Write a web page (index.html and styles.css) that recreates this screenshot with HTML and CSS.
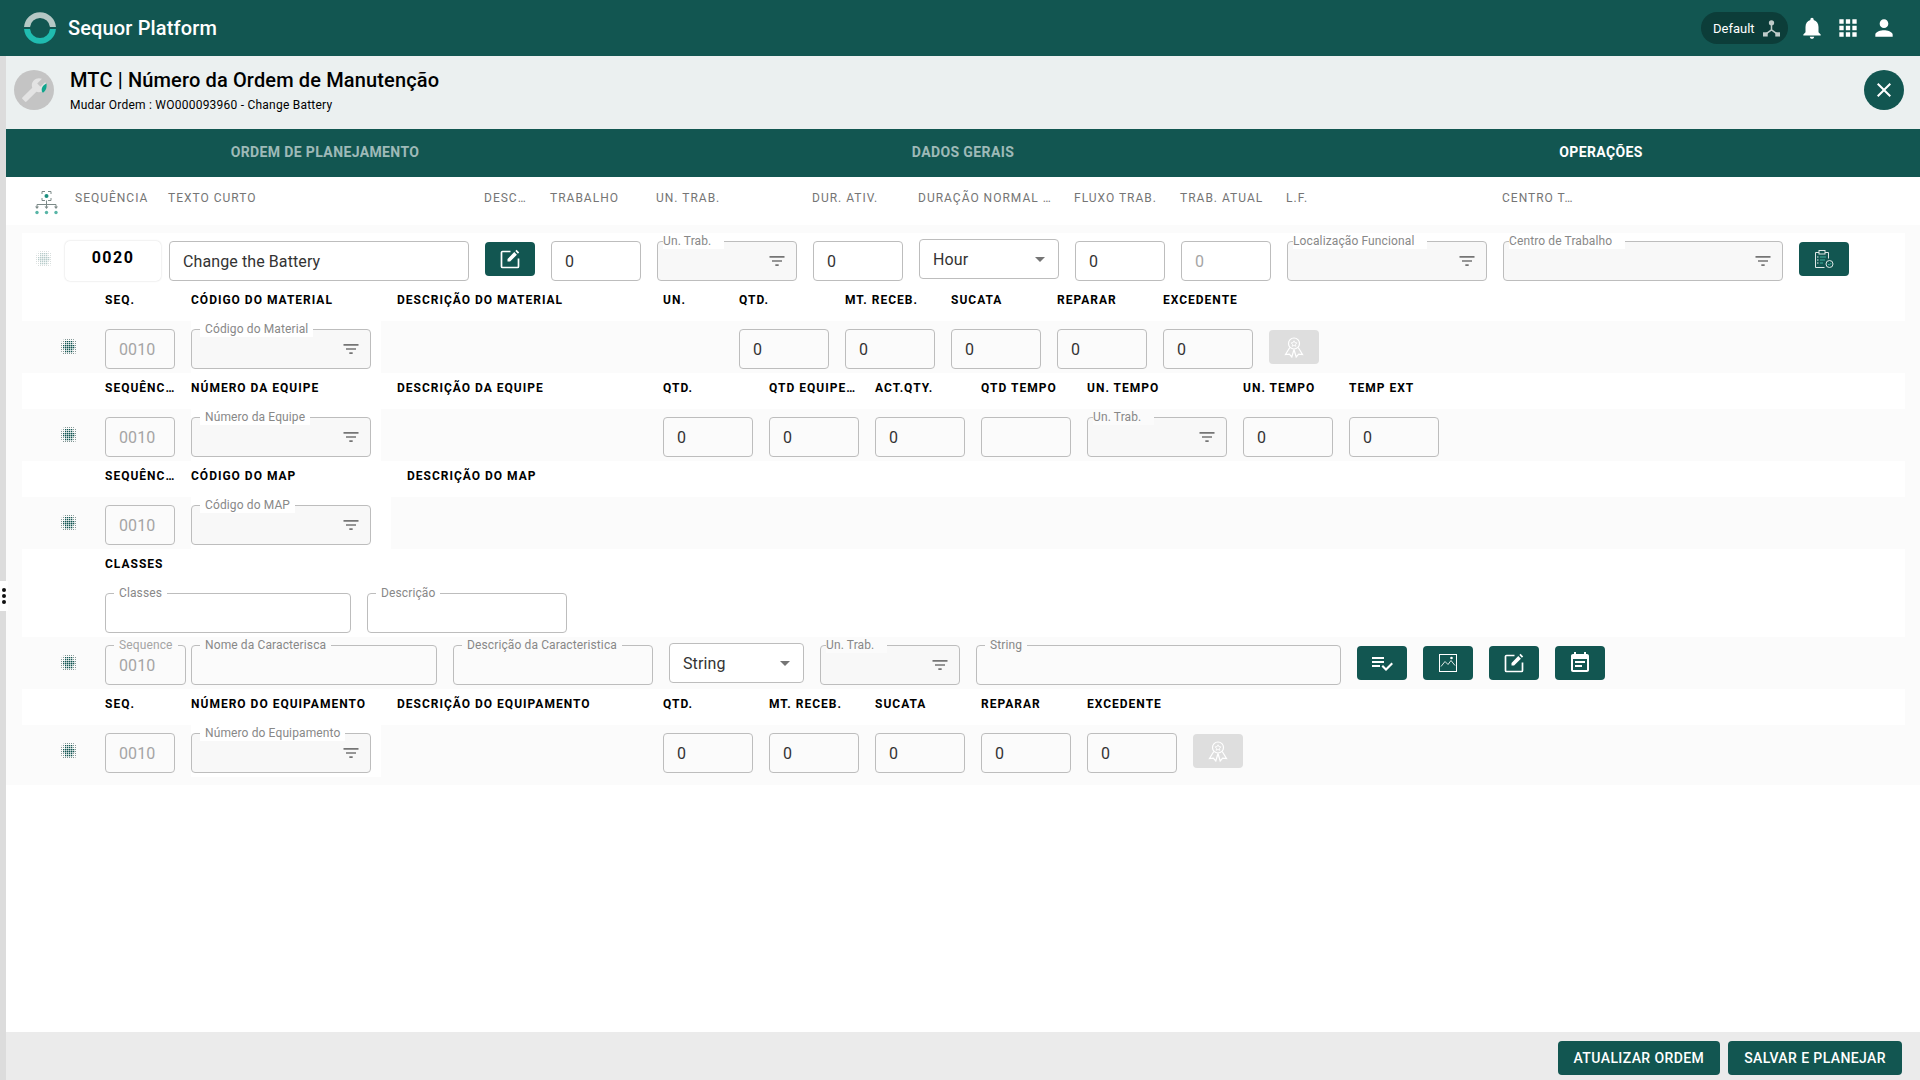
FILE: index.html
```
<!DOCTYPE html>
<html>
<head>
<meta charset="utf-8">
<title>Sequor Platform</title>
<link rel="stylesheet" href="styles.css">
</head>
<body>

<svg class="defs" width="0" height="0">
    <defs>
        <pattern id="dots-light" width="2" height="2" patternUnits="userSpaceOnUse"><rect width="1" height="1" fill="#7f9492"/></pattern>
        <pattern id="dots-dark" width="2" height="2" patternUnits="userSpaceOnUse"><rect width="1.300" height="1.300" fill="#125651"/></pattern>
    </defs>
    <symbol id="i-filter" viewBox="0 0 24 24"><path d="M10 18h4v-2h-4v2zM3 6v2h18V6H3zm3 7h12v-2H6v2z"/></symbol>
    <symbol id="i-drag" viewBox="0 0 16 16">
        <rect width="16" height="16" rx="5" fill="url(#dots-light)"/>
        <rect x="4" y="2" width="8" height="12" fill="url(#dots-dark)"/>
        <rect x="2" y="6" width="12" height="4" fill="url(#dots-dark)"/>
    </symbol>
    <symbol id="i-edit" viewBox="0 0 24 24">
        <path d="M12.500 4.500H4.500a1 1 0 0 0-1 1v14a1 1 0 0 0 1 1h15a1 1 0 0 0 1-1v-8" fill="none" stroke="#fff" stroke-width="1.700"/>
        <path d="M9.500 14.500v-2.600l6.800-6.800 2.600 2.600-6.800 6.800zM17.300 4.100l1.300-1.300 2.600 2.600-1.300 1.300z" fill="#fff"/>
    </symbol>
    <symbol id="i-award" viewBox="0 0 24 24">
        <g fill="none" stroke="#fff" stroke-width="1.200">
            <circle cx="12" cy="8.500" r="5.500"/>
            <path d="M7.800 12.500L3.500 19.500l3.800-.4L9.800 22l2.200-7.500M16.200 12.500L20.500 19.500l-3.800-.4-2.500 2.900-2.200-7.500"/>
            <path d="M12 5.800l.9 1.800 2 .3-1.400 1.400.3 2-1.800-.9-1.800.9.3-2-1.400-1.400 2-.3z" stroke-width=".9"/>
        </g>
    </symbol>
</svg>

<header class="topbar">
    <svg class="logo" viewBox="0 0 32 32">
        <path d="M.05 15A16 16 0 0 1 31.950 15H25.950A10 10 0 0 0 6.050 15Z" fill="#b5c8c5"/>
        <path d="M.05 17A16 16 0 0 0 31.950 17H25.950A10 10 0 0 1 6.050 17Z" fill="#20bcb0"/>
    </svg>
    <span class="brand">Sequor Platform</span>
    <div class="topbar-right">
        <div class="pill">
            <span>Default</span>
            <svg class="pill-icon" viewBox="0 0 18 18">
                <circle cx="9" cy="3" r="2.800" fill="#bfcbc9"/>
                <rect x="0" y="13" width="5" height="4.500" fill="#bfcbc9"/>
                <rect x="13" y="13" width="5" height="4.500" fill="#bfcbc9"/>
                <path d="M9 5v5.500M9 10.500l-5.500 4M9 10.500l5.500 4" stroke="#bfcbc9" stroke-width="1.600" fill="none"/>
            </svg>
        </div>
        <svg class="top-icon" viewBox="0 0 24 24"><path d="M12 22c1.100 0 2-.9 2-2h-4c0 1.100.89 2 2 2zm6-6v-5c0-3.070-1.640-5.640-4.500-6.320V4c0-.83-.67-1.500-1.500-1.500s-1.500.67-1.500 1.500v.68C7.630 5.360 6 7.920 6 11v5l-2 2v1h16v-1l-2-2z"/></svg>
        <svg class="top-icon" viewBox="0 0 24 24"><path d="M4 8h4V4H4v4zm6 12h4v-4h-4v4zm-6 0h4v-4H4v4zm0-6h4v-4H4v4zm6 0h4v-4h-4v4zm6-10v4h4V4h-4zm-6 4h4V4h-4v4zm6 6h4v-4h-4v4zm0 6h4v-4h-4v4z"/></svg>
        <svg class="top-icon" viewBox="0 0 24 24"><path d="M12 12c2.210 0 4-1.790 4-4s-1.790-4-4-4-4 1.790-4 4 1.790 4 4 4zm0 2c-2.670 0-8 1.340-8 4v2h16v-2c0-2.660-5.330-4-8-4z"/></svg>
    </div>
</header>

<div class="page">
    <div class="kebab"><i></i><i></i><i></i></div>

    <div class="subheader">
        <div class="avatar">
            <svg viewBox="0 0 24 24">
                <path transform="translate(24 0) scale(-1 1)" d="M22.700 19l-9.100-9.100c.9-2.300.4-5-1.500-6.900-2-2-5-2.400-7.400-1.300L9 6 6 9 1.600 4.700C.4 7.100.9 10.100 2.900 12.100c1.900 1.900 4.600 2.400 6.900 1.500l9.100 9.100c.4.4 1 .4 1.400 0l2.300-2.300c.5-.4.500-1.100.1-1.400z" fill="#e3e3e3"/>
                <path d="M23.500 6c.5 3.500-.5 7-3.300 8.500C18 12.500 19 8 23.500 6z" fill="#0fa58c"/>
            </svg>
        </div>
        <div class="subheader-text">
            <h1>MTC | Número da Ordem de Manutenção</h1>
            <p>Mudar Ordem : WO000093960 - Change Battery</p>
        </div>
        <button class="close-btn">
            <svg viewBox="0 0 24 24"><path d="M19 6.410L17.590 5 12 10.590 6.410 5 5 6.410 10.590 12 5 17.590 6.410 19 12 13.410 17.590 19 19 17.590 13.410 12z"/></svg>
        </button>
    </div>

    <nav class="tabs">
        <a>ORDEM DE PLANEJAMENTO</a>
        <a>DADOS GERAIS</a>
        <a class="active">OPERAÇÕES</a>
    </nav>

    <div class="col-head">
        <svg class="tree-icon" viewBox="0 0 24 24">
            <g fill="none" stroke="#7c8a88" stroke-width="1">
                <path d="M7.500 3V.5h3M13.500.5h3V3M7.500 7v2.500h3M13.500 9.500h3V7"/>
                <path d="M12 9.500v4M2.500 16v-2.500h19V16M12 13.500V16"/>
            </g>
            <path d="M.5 15.500h4L2.500 18zM10 15.500h4L12 18zM19.500 15.500h4L21.500 18z" fill="#7c8a88"/>
            <circle cx="12" cy="5" r="2" fill="#1d8f7f"/>
            <circle cx="2.500" cy="21.500" r="1.700" fill="#58b5a6"/>
            <circle cx="12" cy="21.500" r="1.700" fill="#58b5a6"/>
            <circle cx="21.500" cy="21.500" r="1.700" fill="#58b5a6"/>
        </svg>
        <span class="c-seq">SEQUÊNCIA</span>
        <span class="c300">TEXTO CURTO</span>
        <span class="c-desc">DESC…</span>
        <span class="c90">TRABALHO</span>
        <span class="c140">UN. TRAB.</span>
        <span class="c90">DUR. ATIV.</span>
        <span class="c140">DURAÇÃO NORMAL …</span>
        <span class="c90">FLUXO TRAB.</span>
        <span class="c90">TRAB. ATUAL</span>
        <span class="c200">L.F.</span>
        <span class="c280">CENTRO T…</span>
    </div>

    <div class="content">
        <div class="panel">

            <div class="row-main">
                <svg class="drag"><use href="#i-drag"/></svg>
                <div class="seq-card">0020</div>
                <div class="field c300"><span class="value">Change the Battery</span></div>
                <button class="act"><svg><use href="#i-edit"/></svg></button>
                <div class="field c90"><span class="value">0</span></div>
                <div class="field c140 filled">
                    <label class="tight">Un. Trab.</label>
                    <svg class="filter"><use href="#i-filter"/></svg>
                </div>
                <div class="field c90"><span class="value">0</span></div>
                <div class="field c140 select"><span class="value">Hour</span><svg class="caret" viewBox="0 0 24 24"><path d="M7 10l5 5 5-5z"/></svg></div>
                <div class="field c90"><span class="value">0</span></div>
                <div class="field c90"><span class="value muted">0</span></div>
                <div class="field c200 filled">
                    <label class="tight">Localização Funcional</label>
                    <svg class="filter"><use href="#i-filter"/></svg>
                </div>
                <div class="field c280 filled">
                    <label class="tight">Centro de Trabalho</label>
                    <svg class="filter"><use href="#i-filter"/></svg>
                </div>
                <button class="act">
                    <svg viewBox="0 0 24 24">
                        <path d="M13 5.500h3.500v6M7 5.500H3.500v15h9" fill="none" stroke="#dfe8e6" stroke-width="1"/>
                        <rect x="7" y="3.500" width="6" height="3.500" fill="none" stroke="#dfe8e6" stroke-width="1"/>
                        <circle cx="17.500" cy="17" r="3.500" fill="none" stroke="#dfe8e6" stroke-width="1"/>
                        <path d="M8 10h6M8 13h5M8 16h3M16 17l1.200 1.200 2-2.200" fill="none" stroke="#3fb09e" stroke-width="1"/>
                        <path d="M5 10h1.500M5 13h1.500M5 16h1.500" stroke="#dfe8e6" stroke-width="1"/>
                    </svg>
                </button>
            </div>

            <div class="heads">
                <span class="c70">SEQ.</span>
                <span class="c190">CÓDIGO DO MATERIAL</span>
                <span class="c250">DESCRIÇÃO DO MATERIAL</span>
                <span class="c60">UN.</span>
                <span class="c90">QTD.</span>
                <span class="c90">MT. RECEB.</span>
                <span class="c90">SUCATA</span>
                <span class="c90">REPARAR</span>
                <span class="c90">EXCEDENTE</span>
            </div>
            <div class="band">
                <svg class="drag"><use href="#i-drag"/></svg>
                <div class="field c70"><span class="value muted">0010</span></div>
                <div class="code-cell">
                    <div class="field c180 filled"><label>Código do Material</label><svg class="filter"><use href="#i-filter"/></svg></div>
                </div>
                <div class="c250"></div>
                <div class="c60"></div>
                <div class="field c90"><span class="value">0</span></div>
                <div class="field c90"><span class="value">0</span></div>
                <div class="field c90"><span class="value">0</span></div>
                <div class="field c90"><span class="value">0</span></div>
                <div class="field c90"><span class="value">0</span></div>
                <button class="act off"><svg><use href="#i-award"/></svg></button>
            </div>

            <div class="heads">
                <span class="c70">SEQUÊNC…</span>
                <span class="c190">NÚMERO DA EQUIPE</span>
                <span class="c250">DESCRIÇÃO DA EQUIPE</span>
                <span class="c90">QTD.</span>
                <span class="c90">QTD EQUIPE…</span>
                <span class="c90">ACT.QTY.</span>
                <span class="c90">QTD TEMPO</span>
                <span class="c140">UN. TEMPO</span>
                <span class="c90">UN. TEMPO</span>
                <span class="c90">TEMP EXT</span>
            </div>
            <div class="band">
                <svg class="drag"><use href="#i-drag"/></svg>
                <div class="field c70"><span class="value muted">0010</span></div>
                <div class="code-cell">
                    <div class="field c180 filled"><label>Número da Equipe</label><svg class="filter"><use href="#i-filter"/></svg></div>
                </div>
                <div class="c250"></div>
                <div class="field c90"><span class="value">0</span></div>
                <div class="field c90"><span class="value">0</span></div>
                <div class="field c90"><span class="value">0</span></div>
                <div class="field c90"></div>
                <div class="field c140 filled"><label class="tight">Un. Trab.</label><svg class="filter"><use href="#i-filter"/></svg></div>
                <div class="field c90"><span class="value">0</span></div>
                <div class="field c90"><span class="value">0</span></div>
            </div>

            <div class="heads">
                <span class="c70">SEQUÊNC…</span>
                <span class="c200">CÓDIGO DO MAP</span>
                <span class="c250">DESCRIÇÃO DO MAP</span>
            </div>
            <div class="band">
                <svg class="drag"><use href="#i-drag"/></svg>
                <div class="field c70"><span class="value muted">0010</span></div>
                <div class="code-cell wide">
                    <div class="field c180 filled"><label>Código do MAP</label><svg class="filter"><use href="#i-filter"/></svg></div>
                </div>
            </div>

            <div class="heads heads-classes"><span>CLASSES</span></div>
            <div class="classes">
                <div class="field c246"><label>Classes</label></div>
                <div class="field c200"><label>Descrição</label></div>
            </div>

            <div class="band band-char">
                <svg class="drag"><use href="#i-drag"/></svg>
                <div class="field c81"><label class="pale">Sequence</label><span class="value muted">0010</span></div>
                <div class="field c246"><label>Nome da Caracterisca</label></div>
                <div class="field c200"><label>Descrição da Caracteristica</label></div>
                <div class="field c135 select"><span class="value">String</span><svg class="caret" viewBox="0 0 24 24"><path d="M7 10l5 5 5-5z"/></svg></div>
                <div class="field c140 filled"><label class="tight">Un. Trab.</label><svg class="filter"><use href="#i-filter"/></svg></div>
                <div class="field c365"><label>String</label></div>
                <button class="act">
                    <svg viewBox="0 0 24 24"><path fill="#fff" d="M14 10H2v2h12v-2zm0-4H2v2h12V6zM2 16h8v-2H2v2zm19.500-4.500L23 13l-6.990 7-4.510-4.500L13 14l3.010 3 5.490-5.500z"/></svg>
                </button>
                <button class="act">
                    <svg viewBox="0 0 24 24">
                        <rect x="3.500" y="3.500" width="17" height="17" fill="none" stroke="#fff" stroke-width="1"/>
                        <path d="M5 15.500l4-5 3 3 3-4 4 5" fill="none" stroke="#dfe8e6" stroke-width="1"/>
                        <circle cx="15.500" cy="7" r="1.300" fill="#fff"/>
                    </svg>
                </button>
                <button class="act"><svg><use href="#i-edit"/></svg></button>
                <button class="act">
                    <svg viewBox="0 0 24 24"><path fill="#fff" d="M17 10H7v2h10v-2zm2-7h-1V1h-2v2H8V1H6v2H5c-1.110 0-1.990.9-1.990 2L3 19c0 1.100.89 2 2 2h14c1.100 0 2-.9 2-2V5c0-1.100-.9-2-2-2zm0 16H5V8h14v11zm-5-5H7v2h7v-2z"/></svg>
                </button>
            </div>

            <div class="heads">
                <span class="c70">SEQ.</span>
                <span class="c190">NÚMERO DO EQUIPAMENTO</span>
                <span class="c250">DESCRIÇÃO DO EQUIPAMENTO</span>
                <span class="c90">QTD.</span>
                <span class="c90">MT. RECEB.</span>
                <span class="c90">SUCATA</span>
                <span class="c90">REPARAR</span>
                <span class="c90">EXCEDENTE</span>
            </div>
            <div class="band">
                <svg class="drag"><use href="#i-drag"/></svg>
                <div class="field c70"><span class="value muted">0010</span></div>
                <div class="code-cell">
                    <div class="field c180 filled"><label>Número do Equipamento</label><svg class="filter"><use href="#i-filter"/></svg></div>
                </div>
                <div class="c250"></div>
                <div class="field c90"><span class="value">0</span></div>
                <div class="field c90"><span class="value">0</span></div>
                <div class="field c90"><span class="value">0</span></div>
                <div class="field c90"><span class="value">0</span></div>
                <div class="field c90"><span class="value">0</span></div>
                <button class="act off"><svg><use href="#i-award"/></svg></button>
            </div>

        </div>
    </div>

    <footer class="bottombar">
        <button class="save-btn">ATUALIZAR ORDEM</button>
        <button class="save-btn">SALVAR E PLANEJAR</button>
    </footer>
</div>

</body>
</html>
```

FILE: styles.css
```
* {
    box-sizing: border-box;
}

html, body {
    height: 100%;
}

body {
    margin: 0;
    font-family: Roboto, "Liberation Sans", sans-serif;
    color: #000;
    background-color: #fff;
    overflow: hidden;
    display: flex;
    flex-direction: column;
}

.defs {
    position: absolute;
}

/* top bar */
.topbar {
    height: 56px;
    flex: none;
    background-color: #125651;
    display: flex;
    align-items: center;
    padding-left: 24px;
}

.logo {
    width: 32px;
    height: 32px;
}

.brand {
    margin-left: 12px;
    color: #fff;
    font-size: 20px;
    font-weight: 500;
    letter-spacing: 0.15px;
}

.topbar-right {
    margin-left: auto;
    display: flex;
    align-items: center;
    gap: 10px;
    padding-right: 23px;
}

.pill {
    width: 87px;
    height: 32px;
    margin-right: 1px;
    padding: 0 8px 0 12px;
    border-radius: 16px;
    background-color: #0c3d39;
    color: #fff;
    font-size: 13px;
    display: flex;
    align-items: center;
    justify-content: space-between;
}

.pill-icon {
    width: 17px;
    height: 17px;
}

.top-icon {
    width: 26px;
    height: 26px;
    fill: #fff;
}

.page {
    flex: 1;
    min-height: 0;
    display: flex;
    flex-direction: column;
    border-left: 6px solid #dcdcdc;
    position: relative;
}

.kebab {
    position: absolute;
    left: -6px;
    top: 525px;
    width: 8px;
    height: 30px;
    background-color: #fff;
    display: flex;
    flex-direction: column;
    align-items: center;
    justify-content: center;
    gap: 2px;
}

.kebab i {
    width: 4px;
    height: 4px;
    border-radius: 50%;
    background-color: #111;
}

/* title area */
.subheader {
    height: 73px;
    flex: none;
    background-color: #ebf0f0;
    display: flex;
    align-items: center;
    padding: 0 16px 5px 8px;
}

.avatar {
    width: 40px;
    height: 40px;
    border-radius: 50%;
    background-color: #c4c4c4;
    display: flex;
    align-items: center;
    justify-content: center;
}

.avatar svg {
    width: 26px;
    height: 26px;
}

.subheader-text {
    margin-left: 16px;
}

.subheader-text h1 {
    margin: 0;
    font-size: 20px;
    font-weight: 500;
    line-height: 24px;
    letter-spacing: 0.14px;
}

.subheader-text p {
    margin: 5px 0 0;
    font-size: 12px;
    line-height: 16px;
    letter-spacing: 0.23px;
}

.close-btn {
    margin-left: auto;
    width: 40px;
    height: 40px;
    padding: 8px;
    border: none;
    border-radius: 50%;
    background-color: #125651;
}

.close-btn svg {
    display: block;
    fill: #fff;
}

/* tabs */
.tabs {
    height: 48px;
    flex: none;
    background-color: #125651;
    display: grid;
    grid-template-columns: repeat(3, 1fr);
}

.tabs a {
    display: flex;
    align-items: center;
    justify-content: center;
    padding-bottom: 2px;
    color: rgba(255, 255, 255, 0.6);
    font-size: 14px;
    font-weight: 700;
    letter-spacing: 0.38px;
}

.tabs a.active {
    color: #fff;
}

/* column titles */
.col-head {
    height: 48px;
    flex: none;
    display: flex;
    align-items: center;
    gap: 16px;
    padding-left: 28px;
    padding-bottom: 6px;
    font-size: 12px;
    letter-spacing: 1px;
    color: #757575;
}

.col-head span {
    flex: none;
    white-space: nowrap;
}

.tree-icon {
    width: 25px;
    height: 24px;
    flex: none;
    margin-top: 10px;
}

.c-seq { width: 77px; }
.c-desc { width: 50px; }

/* form area */
.content {
    padding: 8px 15px 8px 16px;
    background-color: #fbfbfb;
}

.panel {
    background-color: #fff;
}

.row-main {
    display: flex;
    gap: 16px;
    padding: 8px 0 4px 14px;
    align-items: flex-start;
}

.drag {
    width: 16px;
    height: 16px;
    flex: none;
    margin-top: 10px;
}

.row-main .drag {
    opacity: 0.3;
}

.seq-card {
    width: 96px;
    height: 40px;
    flex: none;
    background-color: #fff;
    border-radius: 5px;
    box-shadow: 0 0 2px rgba(0, 0, 0, 0.18);
    text-align: center;
    font-size: 16px;
    font-weight: 700;
    line-height: 34px;
    letter-spacing: 1.5px;
    margin-left: -3px;
    margin-right: -8px;
}

.heads {
    height: 36px;
    display: flex;
    gap: 16px;
    padding-left: 83px;
    font-size: 12px;
    font-weight: 700;
    letter-spacing: 1px;
    line-height: 30px;
}

.heads span {
    flex: none;
    white-space: nowrap;
}

.heads-classes {
    height: 28px;
}

.band {
    height: 52px;
    display: flex;
    gap: 16px;
    padding: 8px 0 0 39px;
    background-color: #fbfbfb;
    align-items: flex-start;
}

.band .drag {
    margin-right: 12px;
}

.band-char {
    gap: 0;
}

.band-char .drag {
    margin-right: 28px;
}

.band-char .field,
.band-char .act {
    margin-right: 16px;
}

.band-char .c81 {
    margin-right: 5px;
}

.code-cell {
    width: 190px;
    height: 52px;
    flex: none;
    margin-top: -8px;
    padding-top: 8px;
    background-color: #fff;
}

.code-cell.wide {
    width: 200px;
}

.classes {
    height: 60px;
    padding: 16px 0 0 83px;
    display: flex;
    gap: 16px;
}

.c60 { width: 60px; flex: none; }
.c70 { width: 70px; flex: none; }
.c81 { width: 81px; flex: none; }
.c90 { width: 90px; flex: none; }
.c135 { width: 135px; flex: none; }
.c140 { width: 140px; flex: none; }
.c180 { width: 180px; flex: none; }
.c190 { width: 190px; flex: none; }
.c200 { width: 200px; flex: none; }
.c246 { width: 246px; flex: none; }
.c250 { width: 250px; flex: none; }
.c280 { width: 280px; flex: none; }
.c300 { width: 300px; flex: none; }
.c365 { width: 365px; flex: none; }

/* outlined inputs */
.field {
    height: 40px;
    position: relative;
    display: flex;
    align-items: center;
    border: 1px solid #bdbdbd;
    border-radius: 4px;
}

.field.filled {
    background-color: #f8f8f8;
}

.field.select {
    margin-top: -2px;
    padding-right: 6px;
    justify-content: space-between;
    background-color: #fff;
}

.value {
    padding-left: 13px;
    font-size: 16px;
    letter-spacing: 0.1px;
    color: #333;
}

.value.muted {
    color: #a5a5a5;
}

.field label {
    position: absolute;
    top: -9px;
    left: 8px;
    padding: 0 5px;
    font-size: 12px;
    line-height: 16px;
    letter-spacing: 0.12px;
    color: #888;
    background-color: #fbfbfb;
    white-space: nowrap;
}

.field label.tight {
    left: 5px;
    padding: 0 13px 0 0;
}

.field label.pale {
    color: #a5a5a5;
}

.classes label,
.code-cell label,
.row-main label {
    background-color: #fff;
}

.filter {
    position: absolute;
    right: 9px;
    top: 9px;
    width: 20px;
    height: 20px;
    fill: #757575;
}

.caret {
    width: 24px;
    height: 24px;
    fill: #757575;
}

/* square action buttons */
.act {
    width: 50px;
    height: 34px;
    flex: none;
    margin-top: 1px;
    padding: 0;
    border: none;
    border-radius: 4px;
    background-color: #125651;
    display: flex;
    align-items: center;
    justify-content: center;
}

.act svg {
    width: 24px;
    height: 24px;
}

.act.off {
    background-color: #dedede;
}

/* footer */
.bottombar {
    margin-top: auto;
    height: 48px;
    flex: none;
    background-color: #ebebeb;
    display: flex;
    justify-content: flex-end;
    gap: 8px;
    padding: 9px 18px 0 0;
}

.save-btn {
    height: 34px;
    padding: 0 16px 1px;
    border: none;
    border-radius: 4px;
    background-color: #125651;
    color: #fff;
    font-family: Roboto, sans-serif;
    font-size: 14px;
    font-weight: 500;
    letter-spacing: 0.4px;
}
```
